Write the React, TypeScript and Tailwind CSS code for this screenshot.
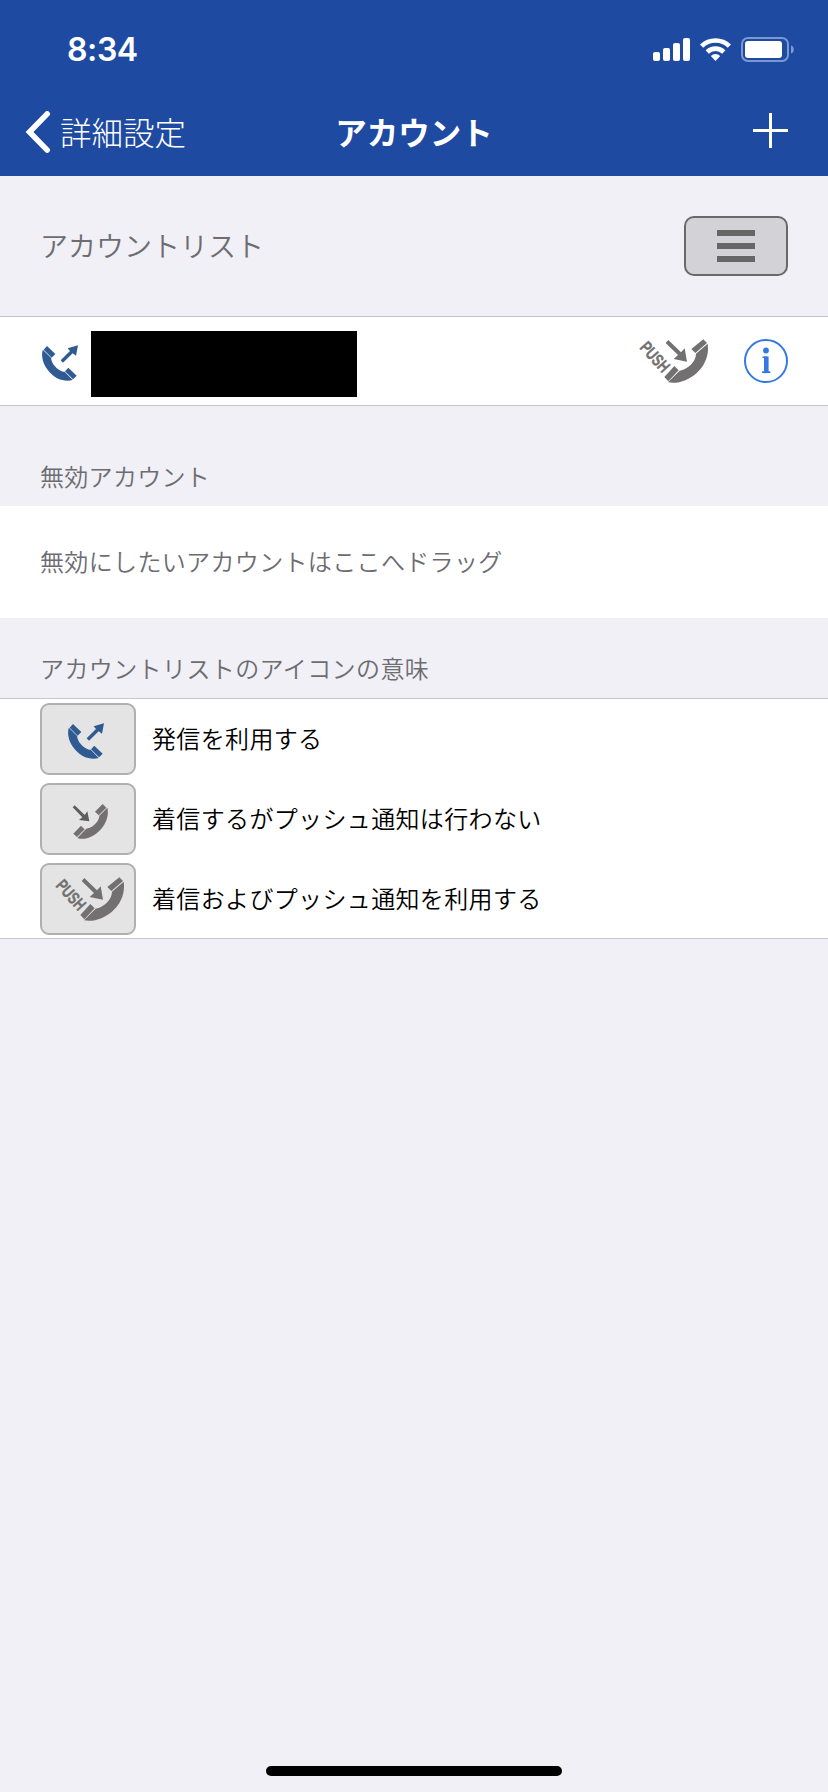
import React from 'react';

interface IconProps {
  className?: string;
}

type AccountIcon = 'outgoing' | 'incoming' | 'push';

const LEGEND: { icon: AccountIcon; label: string }[] = [
  { icon: 'outgoing', label: '発信を利用する' },
  { icon: 'incoming', label: '着信するがプッシュ通知は行わない' },
  { icon: 'push', label: '着信およびプッシュ通知を利用する' },
];

function OutgoingCallIcon({ className }: IconProps) {
  return (
    <svg viewBox="0 0 114 114" className={className} fill="#2f5a92">
      <path d="M21 6 46 30 35 41 11 17Z" />
      <path d="M8.5 17 33.5 42C33 56 50 78 69 83L74 83 98 108C45 122-5 60 8.5 17Z" />
      <path d="M85 71 110 95 99 106 75 82Z" />
      <path d="M62 49 90 21 83 13 114 4 108 35 98 28 69 56Z" />
    </svg>
  );
}

function IncomingCallIcon({ className }: IconProps) {
  return (
    <svg viewBox="0 0 114 114" className={className} fill="#727071">
      <path d="M92 3 103 14 80 37 69 26Z" />
      <path d="M106 14 82 38C82 54 64 72 47 76L42 78 16 105C60 120 118 65 106 14Z" />
      <path d="M27 68 38 79 15 102 4 92Z" />
      <path fill="#5f5d5e" d="M8 7 38 36 46 25 52 55 21 51 31 43 2 13Z" />
    </svg>
  );
}

function PushCallIcon({ className }: IconProps) {
  return (
    <svg viewBox="0 0 222 144" className={className} fill="#727071">
      <text
        transform="translate(6 33) rotate(48)"
        fontSize="52"
        fontWeight="700"
        textLength="104"
        lengthAdjust="spacingAndGlyphs"
        stroke="#727071"
        strokeWidth="1"
        className="font-['Liberation_Sans',sans-serif]"
      >
        PUSH
      </text>
      <path d="M199 7 210 18 175 48 163 36Z" />
      <path d="M212 20 177 50C177 74 150 98 128 101L93 136C150 147 223 92 212 20Z" />
      <path d="M112 87 125 100 94 133 82 120Z" />
      <path d="M94 9 132 46 143 34 150 74 110 66 123 54 86 18Z" />
    </svg>
  );
}

function InfoIcon({ className }: IconProps) {
  return (
    <svg viewBox="0 0 44 44" className={className} fill="none" stroke="#3478e5">
      <circle cx="22" cy="22" r="21" strokeWidth="2" />
      <circle cx="22" cy="11.5" r="2.9" fill="#3478e5" stroke="none" />
      <path d="M18.5 18.2H22.5V33" strokeWidth="1.6" />
      <path d="M22.3 17.5V33.5" strokeWidth="4.6" />
      <path d="M18 33.2H26.3" strokeWidth="1.8" />
    </svg>
  );
}

function StatusBar() {
  return (
    <div className="flex h-[88px] items-start justify-between pl-[67px] pr-[33px] pt-[30px]">
      <span className="font-['Inter',sans-serif] text-[32px] font-semibold leading-[40px] tracking-[-0.4px]">8:34</span>
      <div className="flex items-center gap-[10px] pt-[7px]">
        <svg viewBox="0 0 37 25" className="h-[25px] w-[37px]" fill="#fff">
          <rect x="0" y="15" width="7" height="9" rx="2" />
          <rect x="10" y="11" width="7" height="13" rx="2" />
          <rect x="20" y="6" width="7" height="18" rx="2" />
          <rect x="30" y="1" width="7" height="23" rx="2" />
        </svg>
        <svg viewBox="0 0 31 25" className="h-[25px] w-[31px]" fill="none" stroke="#fff" strokeWidth="4.6">
          <path d="M1.6 9.2A19.8 19.8 0 0 1 29.4 9.2" />
          <path d="M7.2 15A11.8 11.8 0 0 1 23.8 15" />
          <path d="M10.8 18.9A6.6 6.6 0 0 1 20.2 18.9L15.5 24Z" fill="#fff" stroke="none" />
        </svg>
        <svg viewBox="0 0 54 25" className="h-[25px] w-[54px]">
          <rect x="1" y="1" width="46" height="23" rx="6" fill="none" stroke="#7a98d3" strokeWidth="2" />
          <rect x="4" y="4" width="37" height="17" rx="3" fill="#fff" />
          <path d="M50 8.5C53.8 9.5 53.8 15.5 50 16.5Z" fill="#7a98d3" />
        </svg>
      </div>
    </div>
  );
}

function NavBar() {
  return (
    <div className="grid h-[88px] grid-cols-3 items-center">
      <button className="flex items-center gap-[9px] pl-[25px]">
        <svg viewBox="0 0 26 42" className="h-[42px] w-[26px]" fill="none" stroke="#fff" strokeWidth="5.6" strokeLinecap="round">
          <path d="M22.2 2.9 4.5 21 22.2 39.1" />
        </svg>
        <span className="mb-[3px] text-[31.5px] font-light leading-[44px]">詳細設定</span>
      </button>
      <h1 className="mb-[3px] text-center text-[31.5px] font-bold leading-[44px]">アカウント</h1>
      <button className="justify-self-end pr-[40px]">
        <svg viewBox="0 0 35 35" className="mb-[3px] h-[35px] w-[35px]" fill="none" stroke="#fff" strokeWidth="3">
          <path d="M17.5 0V35M0 17.5H35" />
        </svg>
      </button>
    </div>
  );
}

function LegendIcon({ icon }: { icon: AccountIcon }) {
  return (
    <div className="h-[72px] w-[96px] rounded-[9px] border-2 border-[#b0b0b0] bg-[#e4e4e4]">
      {icon === 'outgoing' && <OutgoingCallIcon className="ml-[23.5px] mt-[17px] h-[38px] w-[38px]" />}
      {icon === 'incoming' && <IncomingCallIcon className="ml-[30px] mt-[18px] h-[38px] w-[38px]" />}
      {icon === 'push' && <PushCallIcon className="ml-[11px] mt-[10px] h-[48px] w-[74px]" />}
    </div>
  );
}

export default function App() {
  return (
    <div className="flex h-[1792px] w-[828px] flex-col bg-[#f0f0f6] font-['Noto_Sans_CJK_JP',sans-serif] text-black">
      <header className="h-[176px] bg-[#1e4aa2] text-white">
        <StatusBar />
        <NavBar />
      </header>

      <div className="flex h-[140px] items-center justify-between px-[40px]">
        <h2 className="mb-[2px] text-[28px] font-[350] text-[#6c6c71]">アカウントリスト</h2>
        <button className="flex h-[60px] w-[104px] flex-col items-center justify-center gap-[7px] rounded-[10px] border-2 border-[#69696b] bg-[#d3d3d7]">
          <span className="h-[6px] w-[38px] bg-[#666]" />
          <span className="h-[6px] w-[38px] bg-[#666]" />
          <span className="h-[6px] w-[38px] bg-[#666]" />
        </button>
      </div>

      <div className="flex h-[90px] items-center border-y border-[#c6c6c9] bg-white px-[40px]">
        <OutgoingCallIcon className="mt-1 h-[38px] w-[38px]" />
        <div className="ml-[13px] mt-[6px] h-[66px] w-[266px] bg-black" />
        <PushCallIcon className="ml-auto h-[48px] w-[74px]" />
        <InfoIcon className="ml-[33px] h-[44px] w-[44px]" />
      </div>

      <div className="flex h-[100px] items-end px-[40px] pb-[12px]">
        <h2 className="text-[24px] font-[350] tracking-[0.3px] text-[#6c6c71]">無効アカウント</h2>
      </div>
      <div className="flex h-[112px] items-center bg-white px-[40px] pb-[3px]">
        <p className="text-[24px] font-[350] tracking-[0.35px] text-[#6c6c71]">無効にしたいアカウントはここへドラッグ</p>
      </div>

      <div className="flex h-[80px] items-end px-[40px] pb-[12px]">
        <h2 className="text-[24px] font-[350] tracking-[0.4px] text-[#6c6c71]">アカウントリストのアイコンの意味</h2>
      </div>
      <ul className="border-y border-[#c6c6c9] bg-white">
        {LEGEND.map((item) => (
          <li key={item.icon} className="flex h-[80px] items-center gap-[16px] px-[40px] last:h-[79px]">
            <LegendIcon icon={item.icon} />
            <span className="mb-[2px] text-[24px] font-[350] tracking-[0.35px]">{item.label}</span>
          </li>
        ))}
      </ul>

      <div className="mt-auto flex justify-center pb-[16px]">
        <div className="h-[10px] w-[296px] rounded-full bg-black" />
      </div>
    </div>
  );
}
